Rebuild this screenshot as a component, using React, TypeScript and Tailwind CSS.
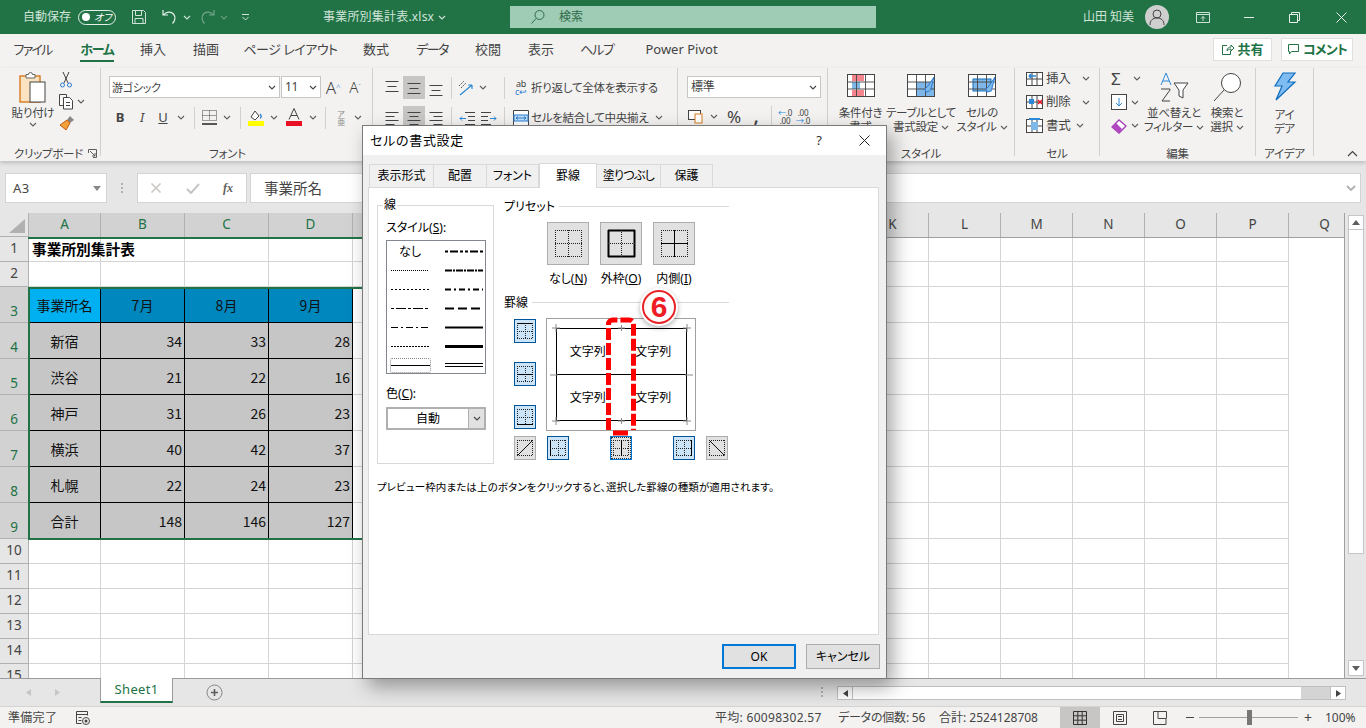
import React from "react";

const Caret = ({ c = "#605e5c" }: { c?: string }) => (
  <svg width="8" height="5" viewBox="0 0 8 5" className="shrink-0"><path d="M1 1l3 3 3-3" fill="none" stroke={c} strokeWidth="1.1" /></svg>
);

const Slot = ({ w, children, hl }: { w: string; children?: React.ReactNode; hl?: boolean }) => (
  <div className={`${w} h-[23px] shrink-0 flex items-center justify-center ${hl ? "bg-[#c8c6c4]" : ""}`}>{children}</div>
);

const Sep = () => <div className="w-px h-[22px] bg-[#d2d0ce] shrink-0" />;

const AlignV = ({ pos }: { pos: "t" | "m" | "b" }) => {
  const y = pos === "t" ? 1 : pos === "m" ? 3 : 5;
  return (
    <svg width="16" height="16" viewBox="0 0 16 16"><path d={`M1.500 ${y}.5h13M3.500 ${y + 5}.5h9M1.500 ${y + 10}.5h13`} stroke="#444" fill="none" /></svg>
  );
};

const AlignH = ({ pos }: { pos: "l" | "c" | "r" }) => (
  <svg width="16" height="16" viewBox="0 0 16 16"><path d={pos === "l" ? "M1.500 2.500h13M1.500 6.500h9M1.500 10.500h13M1.500 14.500h9" : pos === "c" ? "M1.500 2.500h13M3.500 6.500h9M1.500 10.500h13M3.500 14.500h9" : "M1.500 2.500h13M5.500 6.500h9M1.500 10.500h13M5.500 14.500h9"} stroke="#444" fill="none" /></svg>
);

const Stacked = ({ a, b, caret, w, mt = "mt-[2px]" }: { a: string; b: string; caret?: boolean; w: string; mt?: string }) => (
  <div className={`${w} flex flex-col items-center text-[11.500px] leading-[14px] text-[#444] ${mt} whitespace-nowrap`}>
    <span>{a}</span>
    <span className="flex items-center gap-[3px]">{b}{caret && <Caret />}</span>
  </div>
);

const GridIcon = ({ kind }: { kind: "cond" | "table" | "cell" }) => (
  <svg width="28" height="23" viewBox="0 0 28 23">
    <rect x=".5" y=".5" width="27" height="22" fill="#fff" stroke="#444" />
    {kind === "cond" && <><rect x="5" y="1" width="12" height="6" fill="#f4858e" /><rect x="5" y="8" width="8" height="7" fill="#7fb8e8" /><rect x="5" y="16" width="12" height="6" fill="#f4858e" /></>}
    {kind === "table" && <rect x="9" y="8" width="18" height="14" fill="#7fb8e8" />}
    {kind === "cell" && <rect x="5" y="5" width="18" height="12" fill="#7fb8e8" stroke="#0f6cbd" />}
    <path d="M.5 8h27M.5 15h27M9.500 .5v22M18.500 .5v22" stroke="#444" fill="none" strokeWidth=".9" />
    {kind !== "cond" && <path d="M27 3l-6 9-3 3 1 3c3 0 5-2 5-4z" fill="#7fb8e8" stroke="#2b7cd3" strokeWidth="1" />}
  </svg>
);

const SmallTable = ({ kind }: { kind: "ins" | "del" | "fmt" }) => (
  <svg width="18" height="16" viewBox="0 0 18 16">
    <rect x=".5" y="1.500" width="16" height="13" fill="#fff" stroke="#444" />
    <path d="M.5 8h16M6 1.500v13M11 1.500v13" stroke="#444" fill="none" />
    {kind === "ins" && <path d="M10 5H3m0 0l2-2m-2 2l2 2" stroke="#2b88d8" strokeWidth="1.600" fill="none" />}
    {kind === "del" && <><rect x="3" y="5" width="5" height="5" fill="#2b88d8" /><path d="M12 6l4 4m0-4l-4 4" stroke="#e81123" strokeWidth="1.400" /></>}
    {kind === "fmt" && <><rect x="5" y="4" width="7" height="8" fill="#7fb8e8" /><path d="M3 1h11" stroke="#2b88d8" strokeWidth="2" /></>}
  </svg>
);

const TitleBar = () => (
  <div className="h-[34px] bg-[#217346] flex items-center text-[#cfe3d8] text-[12px] leading-none shrink-0">
    <span className="ml-[23px] w-[48px] whitespace-nowrap">自動保存</span>
    <div className="ml-[7px] w-[38px] h-[15px] rounded-full border border-[#e6f0ea] flex items-center pl-[3px] gap-[4px]">
      <div className="w-[8px] h-[8px] rounded-full bg-white" />
      <span className="text-[10px] text-white italic">オフ</span>
    </div>
    <svg className="ml-[15px]" width="16" height="16" viewBox="0 0 16 16"><path d="M1.500 1.500h11l2 2v11h-13zM4.500 1.500v5h6v-5M4 14.500v-5h8v5" fill="none" stroke="#cfe3d8" /></svg>
    <svg className="ml-[13px]" width="18" height="18" viewBox="0 0 18 18"><path d="M3 2v5h5M3.500 7C6 3.500 11 3 13.500 6s1.500 7-1 9.500" fill="none" stroke="#e6f0ea" strokeWidth="1.200" /></svg>
    <div className="ml-[5px]"><Caret c="#cfe3d8" /></div>
    <svg className="ml-[8px] opacity-40" width="18" height="18" viewBox="0 0 18 18"><path d="M15 2v5h-5M14.500 7C12 3.500 7 3 4.500 6s-1.500 7 1 9.500" fill="none" stroke="#e6f0ea" strokeWidth="1.200" /></svg>
    <div className="ml-[3px] opacity-40"><Caret c="#cfe3d8" /></div>
    <svg className="ml-[13px]" width="9" height="8" viewBox="0 0 9 8"><path d="M1 1.500h7M1.500 4l3 3 3-3" fill="none" stroke="#cfe3d8" /></svg>
    <span className="ml-[73px] w-[111px] whitespace-nowrap text-[12px] tracking-[0.2px]">事業所別集計表.xlsx</span>
    <div className="ml-[4px]"><Caret c="#cfe3d8" /></div>
    <div className="ml-[64px] w-[366px] h-[22px] bg-[#9fccb4] flex items-center text-[#2f6b4b]">
      <svg className="ml-[20px]" width="16" height="16" viewBox="0 0 16 16"><circle cx="9.500" cy="6" r="4.500" fill="none" stroke="#2f6b4b" /><path d="M6 9.500L1.500 14.500" stroke="#2f6b4b" /></svg>
      <span className="ml-[13px]">検索</span>
    </div>
    <span className="ml-[207px] w-[52px] whitespace-nowrap">山田 知美</span>
    <div className="ml-[10px] w-[24px] h-[24px] rounded-full bg-[#cfcfcf] flex items-center justify-center">
      <svg width="16" height="18" viewBox="0 0 16 18"><circle cx="8" cy="6" r="4" fill="none" stroke="#444" /><path d="M1 17c0-5 3-7 7-7s7 2 7 7" fill="none" stroke="#444" /></svg>
    </div>
    <svg className="ml-[27px]" width="14" height="14" viewBox="0 0 14 14"><path d="M.5 2.500h13v10H.5zM.5 4.500h13M7 11V6.500m-2 2l2-2 2 2" fill="none" stroke="#cfe3d8" /></svg>
    <div className="ml-[34px] w-[10px] h-px bg-[#e6f0ea]" />
    <svg className="ml-[35px]" width="11" height="11" viewBox="0 0 11 11"><path d="M.5 2.500h8v8h-8zM2.500 2.500v-2h8v8h-2" fill="none" stroke="#e6f0ea" /></svg>
    <svg className="ml-[36px]" width="11" height="11" viewBox="0 0 11 11"><path d="M.5.500l10 10m0-10l-10 10" stroke="#e6f0ea" /></svg>
  </div>
);

const tabs: [string, string][] = [
  ["ファイル", "ml-[14px] w-[37px] tracking-[-1.800px]"],
  ["ホーム", "ml-[29px] w-[34px] tracking-[-1.200px] font-bold text-[#217346] border-b-[2px] border-[#217346]"],
  ["挿入", "ml-[26px] w-[26px]"],
  ["描画", "ml-[27px] w-[26px]"],
  ["ページ レイアウト", "ml-[28px] w-[87px] tracking-[-0.500px]"],
  ["数式", "ml-[29px] w-[26px]"],
  ["データ", "ml-[27px] w-[32px] tracking-[-1.600px]"],
  ["校閲", "ml-[27px] w-[26px]"],
  ["表示", "ml-[27px] w-[26px]"],
  ["ヘルプ", "ml-[27px] w-[32px] tracking-[-1.200px]"],
  ["Power Pivot", "ml-[31px] w-[75px]"],
];

const MenuBar = () => (
  <div className="h-[34px] bg-[#f3f2f1] flex items-start shrink-0 text-[13px] leading-none text-[#444] relative">
    {tabs.map(([t, m]) => (
      <div key={t} className={`${m} pt-[9px] h-[28px] whitespace-nowrap flex justify-center shrink-0`}>{t}</div>
    ))}
    <div className="ml-auto mt-[4px] flex gap-[9px] mr-[13px]">
      <div className="w-[59px] h-[23px] bg-white border border-[#e1dfdd] flex items-center justify-center gap-[3px] font-bold text-[#217346]">
        <svg width="13" height="13" viewBox="0 0 13 13"><path d="M6 2.500H1.500v9h8V8M6 8c0-3 2-4 4-4V2l3 3-3 3V6C8 6 7 7 6 8z" fill="none" stroke="#217346" /></svg>
        共有
      </div>
      <div className="w-[72px] h-[23px] bg-white border border-[#e1dfdd] flex items-center justify-center gap-[3px] font-bold text-[#217346] tracking-[-0.800px]">
        <svg width="13" height="13" viewBox="0 0 13 13"><path d="M1.500 1.500h10v7h-7l-2 2.500v-2.500h-1z" fill="none" stroke="#217346" /></svg>
        コメント
      </div>
    </div>
  </div>
);

const Group = ({ w, label, children, labelCls = "" }: { w: string; label: string; children: React.ReactNode; labelCls?: string }) => (
  <div className={`${w} shrink-0 h-[88px] border-r border-[#d2d0ce] flex flex-col relative`}>
    <div className="flex-1 min-h-0">{children}</div>
    <div className={`text-center text-[11.500px] leading-none text-[#444] -mb-[3px] whitespace-nowrap ${labelCls}`}>{label}</div>
  </div>
);

const Ribbon = () => (
  <div className="h-[93px] bg-[#f3f2f1] flex shrink-0 shadow-[0_2px_4px_rgba(0,0,0,0.18)] relative z-10 text-[11.500px] tracking-[-0.250px] leading-none text-[#444]">
    <Group w="w-[101px]" label="クリップボード" labelCls="pr-[3px]">
      <div className="flex">
        <div className="w-[56px] flex flex-col items-center pt-[4px] pl-[10px]">
          <svg width="28" height="31" viewBox="0 0 28 31">
            <rect x="1" y="4" width="20" height="26" fill="#fbe3c2" stroke="#d67a1e" strokeWidth="1.400" />
            <path d="M7 5V2.500h2.500a2 2 0 014 0H16V6H7z" fill="#fff" stroke="#666" />
            <rect x="11" y="10" width="15" height="20" fill="#fff" stroke="#444" />
          </svg>
          <span className="mt-[4px] whitespace-nowrap">貼り付け</span>
          <div className="mt-[3px]"><Caret /></div>
        </div>
        <div className="flex flex-col pl-[3px] pt-[3px] gap-[5px]">
          <svg width="14" height="17" viewBox="0 0 14 17"><path d="M4 1l5 11M10 1L5 12" stroke="#444" fill="none" /><circle cx="3.500" cy="14" r="2" fill="none" stroke="#2b7cd3" /><circle cx="10.500" cy="14" r="2" fill="none" stroke="#2b7cd3" /></svg>
          <div className="flex items-center gap-[2px] -ml-px">
            <svg width="17" height="17" viewBox="0 0 17 17"><path d="M1.500 1.500h7v3M1.500 1.500v11h3.500" fill="#fff" stroke="#444" /><path d="M5.500 4.500h6l3 3v8.500h-9z" fill="#fff" stroke="#444" /><path d="M8 9.500h4M8 12.500h4" stroke="#444" /></svg>
            <Caret />
          </div>
          <svg width="17" height="17" viewBox="0 0 17 17"><path d="M11 1l4 4-4 3-3-3z" fill="#8a8886" /><path d="M8 5l3 3-4 7-6-5z" fill="#f2a13a" stroke="#c55a11" /></svg>
        </div>
      </div>
      <svg className="absolute right-[3px] -bottom-[2px]" width="9" height="9" viewBox="0 0 9 9"><path d="M.5 4V.5h8v8H5M2 2l5 5M7 4v3H4" fill="none" stroke="#605e5c" /></svg>
    </Group>
    <Group w="w-[272px]" label="フォント" labelCls="pr-[18px]">
      <div className="flex pl-[8px] pt-[8px] items-center">
        <div className="w-[171px] h-[22px] bg-white border border-[#c8c6c4] flex items-center px-[2px] justify-between pr-[3px]"><span className="text-[11px]">游ゴシック</span><Caret c="#444" /></div>
        <div className="ml-px w-[40px] h-[22px] bg-white border border-[#c8c6c4] flex items-center px-[3px] justify-between"><span className="text-[12px]">11</span><Caret c="#444" /></div>
        <div className="w-[22px] text-center text-[17px] ml-px font-light">A<sup className="text-[8px] text-[#2b7cd3]">^</sup></div>
        <div className="w-[22px] text-center text-[15px] font-light">A<sup className="text-[8px] text-[#2b7cd3]">ˇ</sup></div>
      </div>
      <div className="flex pl-[8px] pt-[8px] items-center text-[13px]">
        <Slot w="w-[22px]"><b className="font-bold">B</b></Slot>
        <Slot w="w-[22px]"><i>I</i></Slot>
        <Slot w="w-[20px]"><span className="underline">U</span></Slot>
        <Slot w="w-[16px]"><Caret /></Slot>
        <Slot w="w-[5px]" />
        <Sep />
        <Slot w="w-[4px]" />
        <Slot w="w-[20px]">
          <svg width="15" height="16" viewBox="0 0 15 16"><path d="M.5.500h14v10H.5zM7.500.500v10M.5 5.500h14" fill="none" stroke="#444" strokeDasharray="1 1" /><path d="M0 14h15" stroke="#222" strokeWidth="1.500" /></svg>
        </Slot>
        <Slot w="w-[16px]"><Caret /></Slot>
        <Slot w="w-[5px]" />
        <Sep />
        <Slot w="w-[4px]" />
        <Slot w="w-[22px]">
          <svg width="16" height="19" viewBox="0 0 16 19"><path d="M3 9l4-6 4 5-4 4z" fill="#fff" stroke="#444" /><path d="M12 6c2 2 1 4 0 4" stroke="#2b7cd3" fill="none" strokeWidth="1.400" /><rect y="13" width="16" height="5" fill="#ffff00" /></svg>
        </Slot>
        <Slot w="w-[14px]"><Caret /></Slot>
        <Slot w="w-[26px]">
          <svg width="16" height="19" viewBox="0 0 16 19"><path d="M3 11.500L8 .5l5 11M5 7.500h6" stroke="#444" fill="none" /><rect y="13" width="16" height="5" fill="#e81123" /></svg>
        </Slot>
        <Slot w="w-[12px]"><Caret /></Slot>
        <Slot w="w-[6px]" />
        <Sep />
        <Slot w="w-[5px]" />
        <Slot w="w-[20px]"><div className="text-[#8a8886] text-[8px] leading-[8px] text-center">ア<br />亜</div></Slot>
        <Slot w="w-[14px]"><Caret /></Slot>
      </div>
    </Group>
    <Group w="w-[305px]" label="">
      <div className="flex pl-[8px] pt-[8px] items-center">
        <Slot w="w-[22px]"><AlignV pos="t" /></Slot>
        <Slot w="w-[22px]" hl><AlignV pos="m" /></Slot>
        <Slot w="w-[22px]"><AlignV pos="b" /></Slot>
        <Slot w="w-[4px]" /><Sep /><Slot w="w-[3px]" />
        <Slot w="w-[22px]">
          <svg width="18" height="18" viewBox="0 0 18 18"><path d="M2 7l5-5M4 9l5-5" stroke="#555" strokeDasharray="2 1" fill="none" /><path d="M3 16L15 6m0 0h-4m4 0v4" stroke="#2b88d8" fill="none" strokeWidth="1.200" /></svg>
        </Slot>
        <Slot w="w-[12px]"><Caret /></Slot>
        <Slot w="w-[15px]" /><Sep /><Slot w="w-[7px]" />
        <Slot w="w-[18px]">
          <div className="text-[9px] leading-[8px] text-center">ab<br /><span className="text-[#2b7cd3]">c↩</span></div>
        </Slot>
        <span className="ml-px whitespace-nowrap">折り返して全体を表示する</span>
      </div>
      <div className="flex pl-[8px] pt-[7px] items-center">
        <Slot w="w-[22px]"><AlignH pos="l" /></Slot>
        <Slot w="w-[22px]" hl><AlignH pos="c" /></Slot>
        <Slot w="w-[22px]"><AlignH pos="r" /></Slot>
        <Slot w="w-[4px]" /><Sep /><Slot w="w-[5px]" />
        <Slot w="w-[20px]"><svg width="16" height="14" viewBox="0 0 16 14"><path d="M6 1.500h10M9 5.500h7M9 9.500h7M6 13.500h10" stroke="#444" /><path d="M7 7.500H1m2-2l-2 2 2 2" stroke="#2b88d8" fill="none" /></svg></Slot>
        <Slot w="w-[2px]" />
        <Slot w="w-[20px]"><svg width="16" height="14" viewBox="0 0 16 14"><path d="M0 1.500h10M0 5.500h7M0 9.500h7M0 13.500h10" stroke="#444" /><path d="M9 7.500h6m-2-2l2 2-2 2" stroke="#2b88d8" fill="none" /></svg></Slot>
        <Slot w="w-[5px]" /><Sep /><Slot w="w-[7px]" />
        <Slot w="w-[18px]"><svg width="16" height="16" viewBox="0 0 16 16"><path d="M.5.500h15v15H.5z" fill="#fff" stroke="#444" /><rect x="1" y="5" width="14" height="6" fill="#bfe0f7" stroke="#2b7cd3" /><path d="M3 8h10M5 6.500L3 8l2 1.500M11 6.500L13 8l-2 1.500" stroke="#2b7cd3" fill="none" /></svg></Slot>
        <span className="ml-px whitespace-nowrap">セルを結合して中央揃え</span>
        <div className="ml-[7px]"><Caret /></div>
      </div>
    </Group>
    <Group w="w-[150px]" label="">
      <div className="pl-[9px] pt-[8px]">
        <div className="w-[134px] h-[22px] bg-white border border-[#c8c6c4] flex items-center px-[3px] justify-between"><span className="text-[12px]">標準</span><Caret c="#444" /></div>
      </div>
      <div className="flex pl-[9px] pt-[7px] items-center text-[17px]">
        <Slot w="w-[18px]"><svg width="16" height="14" viewBox="0 0 16 14"><rect x=".5" y=".5" width="12" height="9" fill="#fff" stroke="#444" /><rect x="7" y="4" width="7" height="9" fill="#fff" stroke="#d67a1e" /></svg></Slot>
        <Slot w="w-[18px]"><Caret /></Slot>
        <Slot w="w-[22px]">%</Slot>
        <Slot w="w-[22px]"><b>,</b></Slot>
        <Slot w="w-[4px]" /><Sep /><Slot w="w-[4px]" />
        <Slot w="w-[18px]"><span className="text-[8px] leading-[8px] text-center"><span className="text-[#2b88d8]">←</span>.0<br />.00</span></Slot>
        <Slot w="w-[18px]"><span className="text-[8px] leading-[8px] text-center">.00<br /><span className="text-[#2b88d8]">→</span>.0</span></Slot>
      </div>
    </Group>
    <Group w="w-[187px]" label="スタイル">
      <div className="flex pl-[9px] pt-[6px]">
        <div className="w-[47px] flex flex-col items-center"><GridIcon kind="cond" /><Stacked w="w-[47px]" mt="mt-[9px]" a="条件付き" b="書式" /></div>
        <div className="w-[74px] flex flex-col items-center"><GridIcon kind="table" /><Stacked w="w-[74px]" mt="mt-[9px]" a="テーブルとして" b="書式設定" caret /></div>
        <div className="w-[48px] flex flex-col items-center"><GridIcon kind="cell" /><Stacked w="w-[48px]" mt="mt-[9px]" a="セルの" b="スタイル" caret /></div>
      </div>
    </Group>
    <Group w="w-[85px]" label="セル">
      <div className="pl-[11px] flex flex-col -mt-px">
        {([["挿入", "ins", "w-[36px]"], ["削除", "del", "w-[36px]"], ["書式", "fmt", "w-[30px]"]] as [string, "ins" | "del" | "fmt", string][]).map(([t, k, w]) => (
          <div key={t} className="h-[23.500px] flex items-center text-[12.500px]"><SmallTable kind={k} /><span className={`ml-[2px] ${w}`}>{t}</span><Caret /></div>
        ))}
      </div>
    </Group>
    <Group w="w-[156px]" label="編集">
      <div className="flex">
        <div className="w-[45px] pl-[11px] flex flex-col -mt-px">
          <div className="h-[23.500px] flex items-center gap-[6px]"><span className="text-[17px] w-[16px]">Σ</span><Caret /></div>
          <div className="h-[23.500px] flex items-center gap-[4px]"><svg width="16" height="16" viewBox="0 0 16 16"><rect x=".5" y=".5" width="15" height="15" fill="#fff" stroke="#444" /><path d="M8 4v8m-3-3l3 3 3-3" stroke="#2b88d8" fill="none" /></svg><Caret /></div>
          <div className="h-[23.500px] flex items-center gap-[4px]"><svg width="16" height="16" viewBox="0 0 16 16"><path d="M1 9l7-7 7 6-7 7z" fill="#fff" stroke="#a43db5" strokeWidth="1.300" /><path d="M1 9l4-4 6 6-3 4z" fill="#b146c2" /></svg><Caret /></div>
        </div>
        <div className="w-[58px] flex flex-col items-center pt-[4px]">
          <svg width="30" height="30" viewBox="0 0 30 30"><path d="M7 1L2 13M7 1l5 12M4 9h6" stroke="#2b88d8" fill="none" /><path d="M2 17h9v1l-8 11h8" stroke="#444" fill="none" /><path d="M15 11h14l-5 7v8l-4-2v-6z" fill="#fff" stroke="#444" /></svg>
          <div className="mt-[2px]"><Stacked w="w-[58px]" a="並べ替えと" b="フィルター" caret /></div>
        </div>
        <div className="w-[42px] ml-[3px] flex flex-col items-center pt-[4px]">
          <svg width="30" height="30" viewBox="0 0 30 30"><circle cx="19" cy="11" r="9.500" fill="#fff" stroke="#444" /><path d="M12 18L2 29" stroke="#444" /></svg>
          <div className="mt-[2px]"><Stacked w="w-[42px]" a="検索と" b="選択" caret /></div>
        </div>
      </div>
    </Group>
    <Group w="w-[58px]" label="アイデア">
      <div className="flex flex-col items-center pt-[4px]">
        <svg width="24" height="29" viewBox="0 0 24 29"><path d="M10 1h12l-7 9h7L3 28l6-14H2z" fill="#7ebcf1" stroke="#0f6cbd" strokeWidth="1.200" /></svg>
        <div className="mt-[5px]"><Stacked w="w-[44px]" a="アイ" b="デア" /></div>
      </div>
    </Group>
    <svg className="absolute left-[1347px] bottom-[4px]" width="11" height="7" viewBox="0 0 11 7"><path d="M1 6l4.500-4.500L10 6" fill="none" stroke="#444" strokeWidth="1.200" /></svg>
  </div>
);

const FormulaBar = () => (
  <div className="h-[52px] bg-[#e6e6e6] pt-[12px] pl-[5px] pr-[5px] flex shrink-0 items-start text-[#444] leading-none">
    <div className="w-[102px] h-[30px] bg-white border border-[#d4d4d4] flex items-center justify-between pl-[7px] pr-[5px] text-[13px] tracking-[0.5px]">A3
      <svg width="8" height="5" viewBox="0 0 8 5"><path d="M0 0h8L4 5z" fill="#8a8886" /></svg>
    </div>
    <svg className="ml-[13px] mt-[9px]" width="4" height="12" viewBox="0 0 4 12"><path d="M2 1v2M2 5v2M2 9v2" stroke="#b1b1b1" strokeWidth="2" /></svg>
    <div className="ml-[13px] w-[110px] h-[30px] bg-white border border-[#d4d4d4] flex items-center">
      <svg className="ml-[13px]" width="10" height="10" viewBox="0 0 10 10"><path d="M.5.500l9 9m0-9l-9 9" stroke="#c8c6c4" strokeWidth="1.500" /></svg>
      <svg className="ml-[25px]" width="14" height="11" viewBox="0 0 14 11"><path d="M1 6l4 4 8-9" stroke="#c8c6c4" strokeWidth="2" fill="none" /></svg>
      <span className="ml-[23px] text-[12px] italic font-['Liberation_Serif',serif] font-bold text-[#605e5c]">fx</span>
    </div>
    <div className="ml-[3px] flex-1 h-[30px] bg-white border border-[#d4d4d4] flex items-center justify-between pl-[13px] pr-[4px] text-[14.500px] font-['Noto_Sans_CJK_JP',sans-serif]">事業所名
      <svg width="10" height="6" viewBox="0 0 10 6"><path d="M1 1l4 4 4-4" fill="none" stroke="#b1b1b1" strokeWidth="1.800" /></svg>
    </div>
  </div>
);

const colsR = ["K", "L", "M", "N", "O", "P", "Q"];
const colsM = ["E", "F", "G", "H", "I", "J"];
const gridCls = "grid grid-cols-[29px_72px_repeat(9,84px)_repeat(7,72px)]";

type RowData = { n: string; h: string; cells?: string[]; title?: boolean; head?: boolean };
const rows: RowData[] = [
  { n: "1", h: "h-[25px]", title: true },
  { n: "2", h: "h-[25px]" },
  { n: "3", h: "h-[36px]", head: true, cells: ["事業所名", "7月", "8月", "9月"] },
  { n: "4", h: "h-[36px]", cells: ["新宿", "34", "33", "28"] },
  { n: "5", h: "h-[36px]", cells: ["渋谷", "21", "22", "16"] },
  { n: "6", h: "h-[36px]", cells: ["神戸", "31", "26", "23"] },
  { n: "7", h: "h-[36px]", cells: ["横浜", "40", "42", "37"] },
  { n: "8", h: "h-[36px]", cells: ["札幌", "22", "24", "23"] },
  { n: "9", h: "h-[36px]", cells: ["合計", "148", "146", "127"] },
  { n: "10", h: "h-[25px]" },
  { n: "11", h: "h-[25px]" },
  { n: "12", h: "h-[25px]" },
  { n: "13", h: "h-[25px]" },
  { n: "14", h: "h-[25px]" },
  { n: "15", h: "h-[25px]" },
];

const Sheet = () => (
  <div className="flex-1 min-h-0 min-w-0 overflow-hidden relative bg-white border-r border-[#a0a0a0] text-[14px] leading-none font-['Noto_Sans_CJK_JP',sans-serif]">
    <div className={`${gridCls} h-[24px] bg-[#e6e6e6] text-[#444]`}>
      <div className="border-r border-b border-[#b1b1b1] relative overflow-hidden">
        <svg width="28" height="23" viewBox="0 0 28 23"><path d="M25 6v14H9z" fill="#b1b1b1" /></svg>
      </div>
      {["A", "B", "C", "D"].map((c) => (
        <div key={c} className="bg-[#d2d2d2] text-[#217346] border-r border-[#b1b1b1] flex items-center justify-center font-['Noto_Sans',sans-serif] text-[13.500px]">{c}</div>
      ))}
      {colsM.map((c) => <div key={c} className="bg-[#d2d2d2] border-r border-[#b1b1b1] flex items-center justify-center">{c}</div>)}
      {colsR.map((c) => <div key={c} className="border-r border-[#b1b1b1] flex items-center justify-center font-['Noto_Sans',sans-serif] text-[13.500px]">{c}</div>)}
    </div>
    <div className="h-[2px] -mb-[2px] relative flex items-start">
      <div className="w-[28px]" />
      <div className="w-[396px] h-[2px] bg-[#217346]" />
      <div className="flex-1 h-px bg-[#a0a0a0]" />
    </div>
    {rows.map((r) => {
      const sel = !!r.cells;
      const blanks = Array.from({ length: 16 - (r.cells ? r.cells.length : 0) });
      return (
        <div key={r.n} className={`${gridCls} ${r.h}`}>
          <div className={`border-r border-b border-[#b1b1b1] flex items-center justify-center ${sel ? "bg-[#d2d2d2] text-[#217346] pt-[14px]" : "bg-[#e6e6e6] text-[#444]"} font-['Noto_Sans',sans-serif] text-[13.500px]`}>{r.n}</div>
          {r.cells && r.cells.map((c, i) => (
            <div key={i} className={`border-r border-b border-black flex items-center px-[2px] text-[#111] ${r.head ? (i === 0 ? "bg-[#00b0f0] justify-center" : "bg-[#0087bd] justify-center") : i === 0 ? "bg-[#c6c6c6] justify-center" : "bg-[#c6c6c6] justify-end"}`}>{c}</div>
          ))}
          {blanks.map((_, i) => (
            <div key={i} className="border-r border-b border-[#d4d4d4] flex items-center px-[3px] whitespace-nowrap font-bold text-black text-[14.700px]">
              {r.title && i === 0 ? "事業所別集計表" : ""}
            </div>
          ))}
        </div>
      );
    })}
    <div className="absolute left-[28px] top-[74px] w-[400px] h-[253px] border-2 border-[#217346]" />
  </div>
);

const VScroll = () => (
  <div className="w-[21px] shrink-0 bg-[#e6e6e6] flex flex-col pl-[3px] pt-[2px] pb-[2px]">
    <div className="w-[16px] h-[15px] bg-white border border-[#c8c6c4] flex items-center justify-center"><svg width="8" height="5" viewBox="0 0 8 5"><path d="M0 5h8L4 0z" fill="#605e5c" /></svg></div>
    <div className="w-[16px] -mt-px h-[325px] bg-white border border-[#c8c6c4]" />
    <div className="flex-1" />
    <div className="w-[16px] h-[16px] bg-white border border-[#c8c6c4] flex items-center justify-center"><svg width="8" height="5" viewBox="0 0 8 5"><path d="M0 0h8L4 5z" fill="#605e5c" /></svg></div>
  </div>
);

const SheetBar = () => (
  <div className="h-[28px] shrink-0 bg-[#e6e6e6] border-t border-[#9b9b9b] flex items-start border-b-0 text-[#444] leading-none">
    <svg className="ml-[26px] mt-[10px]" width="5" height="7" viewBox="0 0 5 7"><path d="M5 0v7L0 3.500z" fill="#c8c6c4" /></svg>
    <svg className="ml-[24px] mt-[10px]" width="5" height="7" viewBox="0 0 5 7"><path d="M0 0v7l5-3.500z" fill="#c8c6c4" /></svg>
    <div className="ml-[40px] -mt-px w-[73px] h-[25px] bg-white border-x border-[#9b9b9b] border-b-[2px] border-b-[#217346] flex items-center justify-center text-[13px] text-[#217346] tracking-[0.3px]">Sheet1</div>
    <svg className="ml-[33px] mt-[5px]" width="17" height="17" viewBox="0 0 17 17"><circle cx="8.500" cy="8.500" r="7.500" fill="none" stroke="#8a8886" /><path d="M8.500 5v7M5 8.500h7" stroke="#605e5c" strokeWidth="1.600" /></svg>
    <svg className="ml-[597px] mt-[7px]" width="4" height="12" viewBox="0 0 4 12"><path d="M2 1v2M2 5v2M2 9v2" stroke="#b1b1b1" strokeWidth="2" /></svg>
    <div className="ml-[13px] mt-[7px] w-[509px] h-[14px] flex bg-[#d4d4d4] border border-[#c0c0c0]">
      <div className="w-[15px] bg-white border-r border-[#c0c0c0] flex items-center justify-center"><svg width="5" height="7" viewBox="0 0 5 7"><path d="M5 0v7L0 3.500z" fill="#444" /></svg></div>
      <div className="w-[448px] bg-white" />
      <div className="flex-1" />
      <div className="w-[15px] bg-white border-l border-[#c0c0c0] flex items-center justify-center"><svg width="5" height="7" viewBox="0 0 5 7"><path d="M0 0v7l5-3.500z" fill="#444" /></svg></div>
    </div>
  </div>
);

const StatusBar = () => (
  <div className="h-[22px] shrink-0 bg-[#f3f2f1] border-t border-[#d4d4d4] flex items-center text-[12px] text-[#444] leading-none">
    <span className="ml-[8px] w-[48px] whitespace-nowrap tracking-[0.3px]">準備完了</span>
    <svg className="ml-[20px]" width="14" height="14" viewBox="0 0 14 14"><path d="M.5.500h11v4M.5.500v12h5M.5 3.500h11M2.500 6.500h3M2.500 9.500h3" fill="none" stroke="#444" /><circle cx="10" cy="10" r="3.500" fill="none" stroke="#444" /><circle cx="10" cy="10" r="1.500" fill="#444" /></svg>
    <span className="ml-[625px] w-[107px] whitespace-nowrap tracking-[0.3px]">平均: 60098302.57</span>
    <span className="ml-[16px] w-[84px] whitespace-nowrap -tracking-[0.2px]">データの個数: 56</span>
    <span className="ml-[17px] w-[103px] whitespace-nowrap">合計: 2524128708</span>
    <div className="ml-[18px] w-[40px] h-full bg-[#c8c6c4] flex items-center justify-center">
      <svg width="14" height="14" viewBox="0 0 14 14"><path d="M.5.500h13v13H.5zM.5 4.800h13M.5 9.200h13M4.800.500v13M9.200.500v13" fill="none" stroke="#333" /></svg>
    </div>
    <svg className="ml-[13px]" width="14" height="14" viewBox="0 0 14 14"><path d="M.5.500h13v13H.5zM3.500 3.500h7v7h-7zM5 5.500h4M5 8.500h4" fill="none" stroke="#444" /></svg>
    <svg className="ml-[26px]" width="14" height="14" viewBox="0 0 14 14"><path d="M.5.500h4.500v7h8v6H.5zM5 .5h8.500v7" fill="none" stroke="#444" /></svg>
    <div className="ml-[19px] w-[8px] h-px bg-[#444]" />
    <div className="ml-[5px] w-[99px] h-px bg-[#a19f9d] relative">
      <div className="absolute left-[48px] -top-[7px] w-[5px] h-[15px] bg-[#777]" />
    </div>
    <span className="ml-[6px] w-[10px] text-[14px]">+</span>
    <span className="ml-[11px] whitespace-nowrap">100%</span>
  </div>
);

type Side = "top" | "mid" | "bot" | "left" | "vmid" | "right" | "d1" | "d2" | "none";
const CellIcon = ({ s, size }: { s: Side[]; size: number }) => {
  const z = size - 0.5, m = Math.floor(size / 2) + 0.5;
  const L = ({ k, x1, y1, x2, y2 }: { k: Side; x1: number; y1: number; x2: number; y2: number }) => (
    <line x1={x1} y1={y1} x2={x2} y2={y2} stroke={s.includes(k) ? "#000" : "#222"} strokeWidth={s.includes(k) && size > 20 && (k === "top" || k === "bot" || k === "left" || k === "right") ? 2 : 1} strokeDasharray={s.includes(k) ? undefined : "1 1"} />
  );
  return (
    <svg width={size} height={size} viewBox={`0 0 ${size} ${size}`} className="overflow-visible">
      <L k="top" x1={0} y1={0.5} x2={size} y2={0.5} />
      <L k="bot" x1={0} y1={z} x2={size} y2={z} />
      <L k="left" x1={0.5} y1={0} x2={0.5} y2={size} />
      <L k="right" x1={z} y1={0} x2={z} y2={size} />
      {!s.includes("d1") && !s.includes("d2") && <><L k="mid" x1={0} y1={m} x2={size} y2={m} /><L k="vmid" x1={m} y1={0} x2={m} y2={size} /></>}
      {s.includes("d1") && <line x1={0.5} y1={z} x2={z} y2={0.5} stroke="#111" />}
      {s.includes("d2") && <line x1={0.5} y1={0.5} x2={z} y2={z} stroke="#111" />}
    </svg>
  );
};

const BBtn = ({ s, on = true, focus }: { s: Side[]; on?: boolean; focus?: boolean }) => (
  <div className={`w-[22px] h-[24px] flex items-center justify-center shrink-0 border ${focus ? "border-[#0078d7] bg-[#e1e1e1] outline-1 outline-dotted -outline-offset-2 outline-[#333]" : on ? "border-[#005499] bg-[#cce4f7]" : "border-[#adadad] bg-[#e1e1e1]"}`}>
    <CellIcon s={s} size={16} />
  </div>
);

const LS = ({ d, w = 2, dbl }: { d?: string; w?: number; dbl?: boolean }) => (
  <svg width="38" height="7" viewBox="0 0 38 7">
    {dbl ? <path d="M0 1.500h38M0 4.500h38" stroke="#000" /> : <line x1="0" y1="3.500" x2="38" y2="3.500" stroke="#000" strokeWidth={w} strokeDasharray={d} />}
  </svg>
);

const lineRows: [React.ReactNode, React.ReactNode][] = [
  [<span className="text-[12px]">なし</span>, <LS w={2} d="3 2 8 2 3 2" />],
  [<LS w={1} d="1 1" />, <LS w={2} d="7 1 2 1" />],
  [<LS w={1} d="2 2" />, <LS w={2} d="6 3 2 3" />],
  [<LS w={1} d="3 2 10 2" />, <LS w={2} d="9 4" />],
  [<LS w={1} d="7 3 2 3" />, <LS w={2} />],
  [<LS w={1} d="2 1" />, <LS w={3} />],
  [<div className="border border-dotted border-[#888] rounded-[2px] h-[15px] w-[41px] shrink-0 flex items-center"><div className="h-px w-full bg-black" /></div>, <LS dbl />],
];

const Dialog = () => (
  <div className="absolute left-[362px] top-[125px] w-[525px] h-[554px] bg-[#f0f0f0] border border-[#7a7a7a] shadow-[6px_8px_18px_rgba(0,0,0,0.35)] z-20 flex flex-col text-[12px] leading-none text-black">
    <div className="h-[29px] bg-white shrink-0 flex items-center pl-[7px]">
      <span className="text-[13px] tracking-[0.7px]">セルの書式設定</span>
      <span className="ml-auto mr-[37px] text-[13px] text-[#333]">?</span>
      <svg className="mr-[16px]" width="11" height="11" viewBox="0 0 11 11"><path d="M.5.500l10 10m0-10l-10 10" stroke="#222" /></svg>
    </div>
    <div className="h-[32px] shrink-0 pl-[6px] flex items-end">
      {[["表示形式", "w-[65px]"], ["配置", "w-[54px]"], ["フォント", "w-[53px]"]].map(([t, w]) => (
        <div key={t} className={`${w} h-[23px] border border-[#d9d9d9] border-b-0 -mr-px flex items-center justify-center`}>{t}</div>
      ))}
      <div className="w-[58px] h-[25px] ml-px bg-white border border-[#d9d9d9] border-b-0 -mb-px relative z-10 flex items-center justify-center">罫線</div>
      <div className="w-[65px] h-[23px] border border-[#d9d9d9] border-b-0 -ml-px flex items-center justify-center tracking-[-0.700px]">塗りつぶし</div>
      <div className="w-[53px] h-[23px] border border-[#d9d9d9] border-b-0 -ml-px flex items-center justify-center">保護</div>
    </div>
    <div className="ml-[5px] w-[511px] h-[448px] shrink-0 bg-white border border-[#d9d9d9]">
      <div className="flex">
        <div className="ml-[8px] mt-[17px] w-[117px] h-[259px] border border-[#d9d9d9] relative shrink-0 px-[8px]">
          <span className="absolute left-[5px] -top-[7px] bg-white px-[1px]">線</span>
          <div className="mt-[16px] h-[14px] whitespace-nowrap">スタイル(<span className="underline">S</span>):</div>
          <div className="mt-[4px] w-[100px] h-[134px] border border-[#828790] pt-[1px]">
            {lineRows.map(([a, b], i) => (
              <div key={i} className="h-[19px] flex items-center">
                <div className="w-[58px] pl-[2px] pr-[14px] flex justify-center">{a}</div>
                <div className="flex-1 flex">{b}</div>
              </div>
            ))}
          </div>
          <div className="mt-[14px] h-[14px]">色(<span className="underline">C</span>):</div>
          <div className="mt-[5px] w-[100px] h-[23px] border-2 border-[#b0b0b0] flex items-center">
            <span className="flex-1 text-center">自動</span>
            <div className="w-[16px] h-full bg-[#e1e1e1] border-l border-[#b0b0b0] flex items-center justify-center"><Caret c="#444" /></div>
          </div>
        </div>
        <div className="ml-[10px] flex-1 min-w-0">
          <div className="mt-[12px] w-[225px] flex items-center h-[13px]"><span>プリセット</span><div className="ml-[4px] flex-1 h-px bg-[#d9d9d9]" /></div>
          <div className="mt-[9px] ml-[43px] flex gap-[11px]">
            {([[["none"], "なし(", "N", ")"], [["top", "bot", "left", "right"], "外枠(", "O", ")"], [["mid", "vmid"], "内側(", "I", ")"]] as [Side[], string, string, string][]).map(([s, a, u, b]) => (
              <div key={a} className="w-[42px] flex flex-col items-center">
                <div className="w-[42px] h-[43px] bg-[#e1e1e1] border border-[#adadad] flex items-center justify-center"><CellIcon s={s} size={27} /></div>
                <span className="mt-[8px] whitespace-nowrap">{a}<span className="underline">{u}</span>{b}</span>
              </div>
            ))}
          </div>
          <div className="mt-[11px] w-[225px] flex items-center h-[13px]"><span>罫線</span><div className="ml-[4px] flex-1 h-px bg-[#d9d9d9]" /></div>
          <div className="mt-[9px] flex">
            <div className="ml-[10px] flex flex-col gap-[19px] pt-[1px]">
              <BBtn s={["top"]} />
              <BBtn s={["mid"]} />
              <BBtn s={["bot"]} />
            </div>
            <div className="ml-[10px] w-[150px] h-[113px] border border-[#a0a0a0] relative flex items-center justify-center">
              <div className="w-[131px] h-[93px] border border-black grid grid-cols-2 grid-rows-2">
                <div className="flex items-center justify-center border-b border-black pr-[2px] pt-px">文字列</div>
                <div className="flex items-center justify-center border-b border-black pt-px">文字列</div>
                <div className="flex items-center justify-center pr-[2px] pt-px">文字列</div>
                <div className="flex items-center justify-center pt-px">文字列</div>
              </div>
              <svg className="absolute left-0 top-0" width="148" height="111" viewBox="0 0 148 111">
                <path d="M5 9h8M136 9h8M5 102h8M136 102h8M9 5v8M140 5v8M9 98v8M140 98v8M3 56h8M138 56h8M74.500 6v6M74.500 99v6M71 9h7M71 102h7" stroke="#8a8a8a" fill="none" />
              </svg>
              <svg className="absolute left-[58px] -top-px overflow-visible" width="34" height="120" viewBox="0 0 34 120">
                <path d="M3.500 112V6a4 4 0 014-4h17a4 4 0 014 4v106" fill="none" stroke="#ff0000" strokeWidth="5" strokeDasharray="12 3" />
                <path d="M8 115h15" stroke="#ff0000" strokeWidth="5" />
              </svg>
              <div className="absolute left-[95px] -top-[29px] w-[34px] h-[34px] rounded-full bg-white border-[2px] border-[#e8262a] shadow-[0_0_0_2px_#fff,0_2px_5px_2px_rgba(0,0,0,0.3)] flex items-center justify-center text-[#ee1c25] text-[30px] font-bold font-['Liberation_Sans',sans-serif]">6</div>
            </div>
          </div>
          <div className="mt-[5px] ml-[10px] flex">
            <BBtn s={["d1"]} on={false} />
            <div className="ml-[11px]"><BBtn s={["left"]} /></div>
            <div className="ml-[41px]"><BBtn s={["vmid"]} focus /></div>
            <div className="ml-[41px]"><BBtn s={["right"]} /></div>
            <div className="ml-[11px]"><BBtn s={["d2"]} on={false} /></div>
          </div>
        </div>
      </div>
      <div className="mt-[18px] ml-[8px] text-[10.500px] tracking-[0.1px] whitespace-nowrap">プレビュー枠内または上のボタンをクリックすると、選択した罫線の種類が適用されます。</div>
    </div>
    <div className="flex justify-end pr-[6px] pt-[9px] gap-[10px]">
      <div className="w-[74px] h-[25px] border-2 border-[#0078d7] bg-[#e1e1e1] flex items-center justify-center">OK</div>
      <div className="w-[74px] h-[25px] border border-[#adadad] bg-[#e1e1e1] flex items-center justify-center">キャンセル</div>
    </div>
  </div>
);

export default function App() {
  return (
    <div className="w-[1366px] h-[728px] overflow-hidden relative flex flex-col bg-[#e6e6e6] font-['Noto_Sans','Noto_Sans_CJK_JP',sans-serif] [font-feature-settings:'palt']">
      <TitleBar />
      <MenuBar />
      <Ribbon />
      <FormulaBar />
      <div className="flex-1 min-h-0 flex">
        <Sheet />
        <VScroll />
      </div>
      <SheetBar />
      <StatusBar />
      <Dialog />
    </div>
  );
}
